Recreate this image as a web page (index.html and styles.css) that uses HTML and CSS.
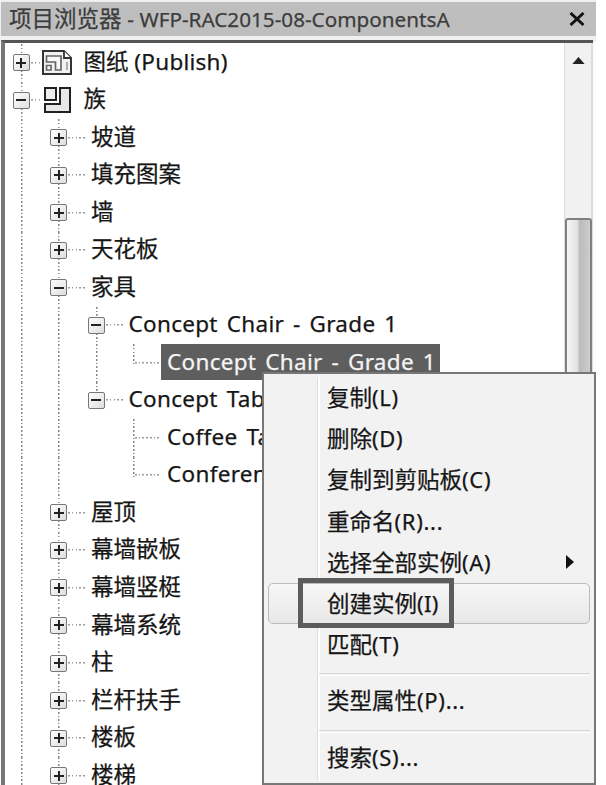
FILE: index.html
```
<!DOCTYPE html>
<html lang="zh-CN">
<head>
  <meta charset="UTF-8" />
  <meta name="viewport" content="width=device-width, initial-scale=1" />
  <title>项目浏览器</title>
  <link rel="stylesheet" href="styles.css">
</head>
<body>
  <div class="browser">
    <div class="titlebar">
      <h1>项目浏览器 <span class="file">- WFP-RAC2015-08-ComponentsA</span></h1>
      <svg class="close" width="16" height="14" viewBox="0 0 16 14">
        <path d="M1.5 1L14.5 13M14.5 1L1.5 13" stroke="#111" stroke-width="2.9" />
      </svg>
    </div>

    <div class="panel">
      <div class="tree">
        <div class="row">
          <i class="guide"><b class="toggle plus"></b></i><i class="dots short"></i>
          <svg class="icon" width="32" height="26" viewBox="0 0 32 26">
            <path d="M1 1H22L29 8V24H1Z" fill="#f2f2f2" stroke="#333" stroke-width="2" />
            <path d="M22 1V8H29" fill="#fff" stroke="#333" stroke-width="1.8" />
            <path d="M4.5 6H19V20H13.5V12H4.5ZM4.5 15.5H9V20H4.5Z" fill="#f8f8f8" stroke="#666" stroke-width="1.7" />
            <path d="M25 12V20" stroke="#888" stroke-width="1.3" />
          </svg>
          <span class="label top">图纸 <span class="publish">(Publish)</span></span>
        </div>
        <div class="row">
          <i class="guide"><b class="toggle minus"></b></i><i class="dots short"></i>
          <svg class="icon" width="32" height="28" viewBox="0 0 32 28">
            <path d="M3 2H14V14H3Z" fill="#eee" stroke="#222" stroke-width="2" />
            <path d="M18 2H28V26H3V18H18Z" fill="#e8e8e8" stroke="#222" stroke-width="2" />
          </svg>
          <span class="label top">族</span>
        </div>
        <div class="row"><i class="guide"></i><i class="guide"><b class="toggle plus"></b></i><i class="dots"></i><span class="label">坡道</span></div>
        <div class="row"><i class="guide"></i><i class="guide"><b class="toggle plus"></b></i><i class="dots"></i><span class="label">填充图案</span></div>
        <div class="row"><i class="guide"></i><i class="guide"><b class="toggle plus"></b></i><i class="dots"></i><span class="label">墙</span></div>
        <div class="row"><i class="guide"></i><i class="guide"><b class="toggle plus"></b></i><i class="dots"></i><span class="label">天花板</span></div>
        <div class="row"><i class="guide"></i><i class="guide"><b class="toggle minus"></b></i><i class="dots"></i><span class="label">家具</span></div>
        <div class="row"><i class="guide"></i><i class="guide"></i><i class="guide"><b class="toggle minus"></b></i><i class="dots"></i><span class="label en">Concept Chair - Grade 1</span></div>
        <div class="row"><i class="guide"></i><i class="guide"></i><i class="guide"></i><i class="guide end"></i><i class="dots leaf"></i><span class="label en selected">Concept Chair - Grade 1</span></div>
        <div class="row"><i class="guide"></i><i class="guide"></i><i class="guide end"><b class="toggle minus"></b></i><i class="dots"></i><span class="label en">Concept Tab</span></div>
        <div class="row"><i class="guide"></i><i class="guide"></i><i class="guide none"></i><i class="guide"></i><i class="dots leaf"></i><span class="label en">Coffee Ta</span></div>
        <div class="row"><i class="guide"></i><i class="guide"></i><i class="guide none"></i><i class="guide end"></i><i class="dots leaf"></i><span class="label en">Conferen</span></div>
        <div class="row"><i class="guide"></i><i class="guide"><b class="toggle plus"></b></i><i class="dots"></i><span class="label">屋顶</span></div>
        <div class="row"><i class="guide"></i><i class="guide"><b class="toggle plus"></b></i><i class="dots"></i><span class="label">幕墙嵌板</span></div>
        <div class="row"><i class="guide"></i><i class="guide"><b class="toggle plus"></b></i><i class="dots"></i><span class="label">幕墙竖梃</span></div>
        <div class="row"><i class="guide"></i><i class="guide"><b class="toggle plus"></b></i><i class="dots"></i><span class="label">幕墙系统</span></div>
        <div class="row"><i class="guide"></i><i class="guide"><b class="toggle plus"></b></i><i class="dots"></i><span class="label">柱</span></div>
        <div class="row"><i class="guide"></i><i class="guide"><b class="toggle plus"></b></i><i class="dots"></i><span class="label">栏杆扶手</span></div>
        <div class="row"><i class="guide"></i><i class="guide"><b class="toggle plus"></b></i><i class="dots"></i><span class="label">楼板</span></div>
        <div class="row"><i class="guide"></i><i class="guide"><b class="toggle plus"></b></i><i class="dots"></i><span class="label">楼梯</span></div>
      </div>
      <div class="scrollbar">
        <svg class="up" width="13" height="7" viewBox="0 0 14 8"><path d="M7 0L14 8H0Z" fill="#222" /></svg>
        <div class="thumb"></div>
      </div>
    </div>
  </div>

  <div class="menu">
    <div class="item">复制<span>(L)</span></div>
    <div class="item">删除<span>(D)</span></div>
    <div class="item">复制到剪贴板<span>(C)</span></div>
    <div class="item">重命名<span>(R)...</span></div>
    <div class="item">选择全部实例<span>(A)</span>
      <svg class="more" width="8" height="14" viewBox="0 0 8 14"><path d="M0 0L8 7L0 14Z" fill="#111" /></svg>
    </div>
    <div class="item hover">创建实例<span class="key-i">(I)</span><div class="mark"></div></div>
    <div class="item">匹配<span>(T)</span></div>
    <div class="line"></div>
    <div class="item">类型属性<span>(P)...</span></div>
    <div class="line"></div>
    <div class="item">搜索<span>(S)...</span></div>
  </div>
</body>
</html>
```
FILE: styles.css
```
* {
  box-sizing: border-box;
}
body {
  margin: 0;
  height: 785px;
  overflow: hidden;
  position: relative;
  background: #fff;
  color: #161616;
  font-family: "Noto Sans", "Noto Sans CJK SC", sans-serif;
  font-size: 22.5px;
  -webkit-text-stroke: 0.25px;
}
.browser {
  width: 596px;
  height: 785px;
  padding-top: 2px;
  background: linear-gradient(#f0f0f0 42px, #fcfcfc 42px);
  display: flex;
  flex-direction: column;
}
.titlebar {
  height: 34px;
  margin-left: 1px;
  padding: 0 11px 0 8px;
  background: #bebebe;
  display: flex;
  align-items: center;
  justify-content: space-between;
  flex: none;
}
h1 {
  margin: 0;
  font-size: 22.5px;
  font-weight: normal;
  line-height: 36px;
  color: #3c3c3c;
  white-space: pre;
}
.file {
  font-size: 20.7px;
}
.panel {
  flex: 1;
  min-height: 0;
  margin: 4px 3px 0 1px;
  border: solid #555;
  border-width: 3px 0 0 4px;
  border-left-color: #777;
  background: #fff;
  display: flex;
}
.tree {
  flex: 1;
  min-width: 0;
  padding: 1px 0 0 8px;
  overflow: hidden;
}
.row {
  height: 37.53px;
  display: flex;
  align-items: center;
  white-space: nowrap;
}
.guide {
  width: 37.5px;
  height: 100%;
  flex: none;
  display: flex;
  align-items: center;
  background: repeating-linear-gradient(#888 0 1.6px, transparent 1.6px 3.75px) 7.5px 0 / 1.5px 100% no-repeat;
}
.guide.end {
  background-size: 1.5px 20px;
}
.guide.none {
  background: none;
}
.toggle {
  width: 17px;
  height: 17px;
  margin-left: -0.5px;
  border: 1.5px solid #777;
  border-radius: 2px;
  background:
    linear-gradient(#222, #222) center / 10px 2px no-repeat,
    linear-gradient(135deg, #fff, #ddd);
}
.toggle.plus {
  background:
    linear-gradient(#222, #222) center / 10px 2px no-repeat,
    linear-gradient(#222, #222) center / 2px 10px no-repeat,
    linear-gradient(135deg, #fff, #ddd);
}
.dots {
  width: 17px;
  height: 2px;
  margin-left: -20px;
  margin-right: 6px;
  flex: none;
  background: repeating-linear-gradient(90deg, #999 0 1.6px, transparent 1.6px 3.75px) 0 0 / 100% 1.5px no-repeat;
}
.dots.short {
  width: 10px;
  margin-right: 1px;
}
.dots.leaf {
  width: 26px;
  margin-left: -28px;
  margin-right: 0;
}
.icon {
  flex: none;
}
.label {
  line-height: 36px;
  margin-bottom: 2px;
}
.label.top {
  margin-left: 10px;
}
.publish {
  letter-spacing: 0.25px;
}
.en {
  letter-spacing: 0.3px;
  word-spacing: 2.8px;
}
.leaf + .label {
  padding: 0 4px 0 6px;
}
.label.selected {
  background: #5e5e5e;
  color: #f4f4f4;
}
.scrollbar {
  width: 29px;
  border: solid #dcdcdc;
  border-width: 0 2px 0 1px;
  background: #f1f1f1;
  display: flex;
  flex-direction: column;
  align-items: center;
}
.up {
  margin-top: 14px;
  flex: none;
}
.thumb {
  width: 27px;
  flex: 1;
  margin-top: 154px;
  border: 2px solid #808080;
  border-radius: 3px;
  background: linear-gradient(90deg, #f6f6f6, #e2e2e2 45%, #bbb 55%, #ccc);
}
/* context menu, opens over the tree */
.menu {
  position: absolute;
  left: 262px;
  top: 372px;
  width: 334px;
  height: 413px;
  padding: 3px 4px 0;
  border: 2px solid #777;
  background: linear-gradient(90deg, #ddd 1px, #fff 1px) 53px 3px / 3px 403px no-repeat, #f2f2f2;
}
.item {
  height: 41.2px;
  padding-left: 59px;
  line-height: 41px;
  position: relative;
  display: flex;
  align-items: center;
  white-space: nowrap;
}
.item span {
  font-size: 22px;
  letter-spacing: 0.7px;
}
.item .key-i {
  letter-spacing: 0.3px;
}
.more {
  position: absolute;
  right: 16px;
}
.hover {
  border: 1.5px solid #bbb;
  border-radius: 5px;
  padding-left: 58px;
  background: linear-gradient(#f6f6f6, #e8e8e8);
}
.mark {
  position: absolute;
  left: 29px;
  top: -6px;
  width: 156px;
  height: 50px;
  border: 5px solid #5c5c5c;
}
.line {
  height: 3px;
  margin: 8px 0 4px 51px;
  border-top: 1.5px solid #d6d6d6;
  border-bottom: 1.5px solid #fff;
}
```
